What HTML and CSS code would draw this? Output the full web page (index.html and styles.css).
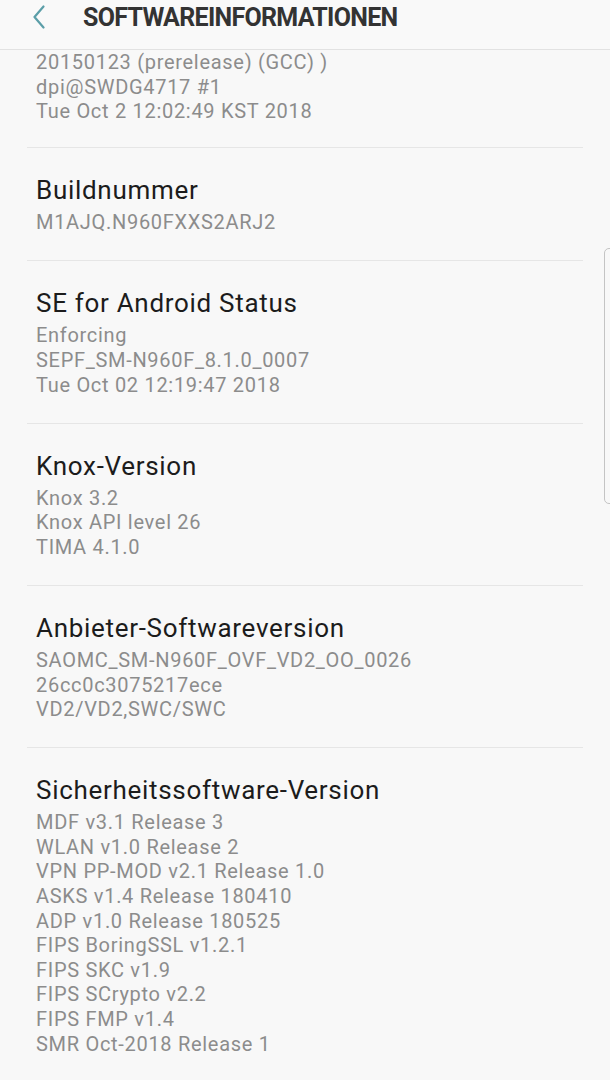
FILE: index.html
```html
<!DOCTYPE html>
<html lang="de">
<head>
  <meta charset="UTF-8" />
  <meta name="viewport" content="width=device-width, initial-scale=1.0"/>
  <title>Softwareinformationen</title>
  <link rel="stylesheet" href="styles.css">
</head>
<body>

  <div class="screen">
    <header class="appbar">
      <button class="back" aria-label="Zurück">
        <svg width="12" height="25" viewBox="0 0 12 25">
          <path d="M10.5 1.5 L1.5 12 L10.5 22.5" fill="none" stroke="#5b9ea8" stroke-width="2.2" stroke-linecap="round" stroke-linejoin="round"/>
        </svg>
      </button>
      <h1>SOFTWAREINFORMATIONEN</h1>
    </header>

    <main class="scroll">
      <div class="list">
        <section class="item first">
          <p>20150123 (prerelease) (GCC) )</p>
          <p>dpi@SWDG4717 #1</p>
          <p>Tue Oct 2 12:02:49 KST 2018</p>
        </section>

        <section class="item">
          <h2>Buildnummer</h2>
          <p>M1AJQ.N960FXXS2ARJ2</p>
        </section>

        <section class="item">
          <h2>SE for Android Status</h2>
          <p>Enforcing</p>
          <p>SEPF_SM-N960F_8.1.0_0007</p>
          <p>Tue Oct 02 12:19:47 2018</p>
        </section>

        <section class="item">
          <h2>Knox-Version</h2>
          <p>Knox 3.2</p>
          <p>Knox API level 26</p>
          <p>TIMA 4.1.0</p>
        </section>

        <section class="item">
          <h2>Anbieter-Softwareversion</h2>
          <p>SAOMC_SM-N960F_OVF_VD2_OO_0026</p>
          <p>26cc0c3075217ece</p>
          <p>VD2/VD2,SWC/SWC</p>
        </section>

        <section class="item">
          <h2>Sicherheitssoftware-Version</h2>
          <p>MDF v3.1 Release 3</p>
          <p>WLAN v1.0 Release 2</p>
          <p>VPN PP-MOD v2.1 Release 1.0</p>
          <p>ASKS v1.4 Release 180410</p>
          <p>ADP v1.0 Release 180525</p>
          <p>FIPS BoringSSL v1.2.1</p>
          <p>FIPS SKC v1.9</p>
          <p>FIPS SCrypto v2.2</p>
          <p>FIPS FMP v1.4</p>
          <p>SMR Oct-2018 Release 1</p>
        </section>
      </div>
      <div class="scrollbar"></div>
    </main>
  </div>

</body>
</html>
```

FILE: styles.css
```css
body {
  margin: 0;
  font-family: Roboto, "Liberation Sans", sans-serif;
  background: #f8f8f8;
}
.screen {
  height: 1080px;
  display: flex;
  flex-direction: column;
}
.appbar {
  height: 49px;
  border-bottom: 1px solid #e2e2e2;
  display: flex;
  align-items: center;
  flex-shrink: 0;
  background: #f9f9f9;
}
.back {
  background: none;
  border: none;
  padding: 0;
  margin: 0 0 15px 33px;
  width: 12px;
  height: 25px;
  display: flex;
}
.appbar h1 {
  margin: 0 0 15px 38px;
  font-size: 25px;
  font-weight: 700;
  color: #333;
  letter-spacing: -0.7px;
}
.scroll {
  flex: 1;
  overflow: hidden;
  position: relative;
}
.list {
  margin: 0 27px;
}
.item {
  padding: 26px 0 25.5px 9px;
  border-bottom: 1px solid #e6e6e6;
}
.item.first {
  padding-top: 0;
  padding-bottom: 23.5px;
}
.item:last-child {
  border-bottom: none;
}
.item h2 {
  margin: 0 0 4px;
  font-size: 26px;
  line-height: 32px;
  font-weight: 400;
  color: #1c1c1c;
  letter-spacing: 0.7px;
}
.item p {
  margin: 0;
  font-size: 20px;
  line-height: 24.6px;
  color: #8c8c8c;
  letter-spacing: 0.7px;
}
.scrollbar {
  position: absolute;
  top: 198px;
  right: -6px;
  width: 10px;
  height: 254px;
  border: 1px solid #c4c4c4;
  border-radius: 5px;
}
```
